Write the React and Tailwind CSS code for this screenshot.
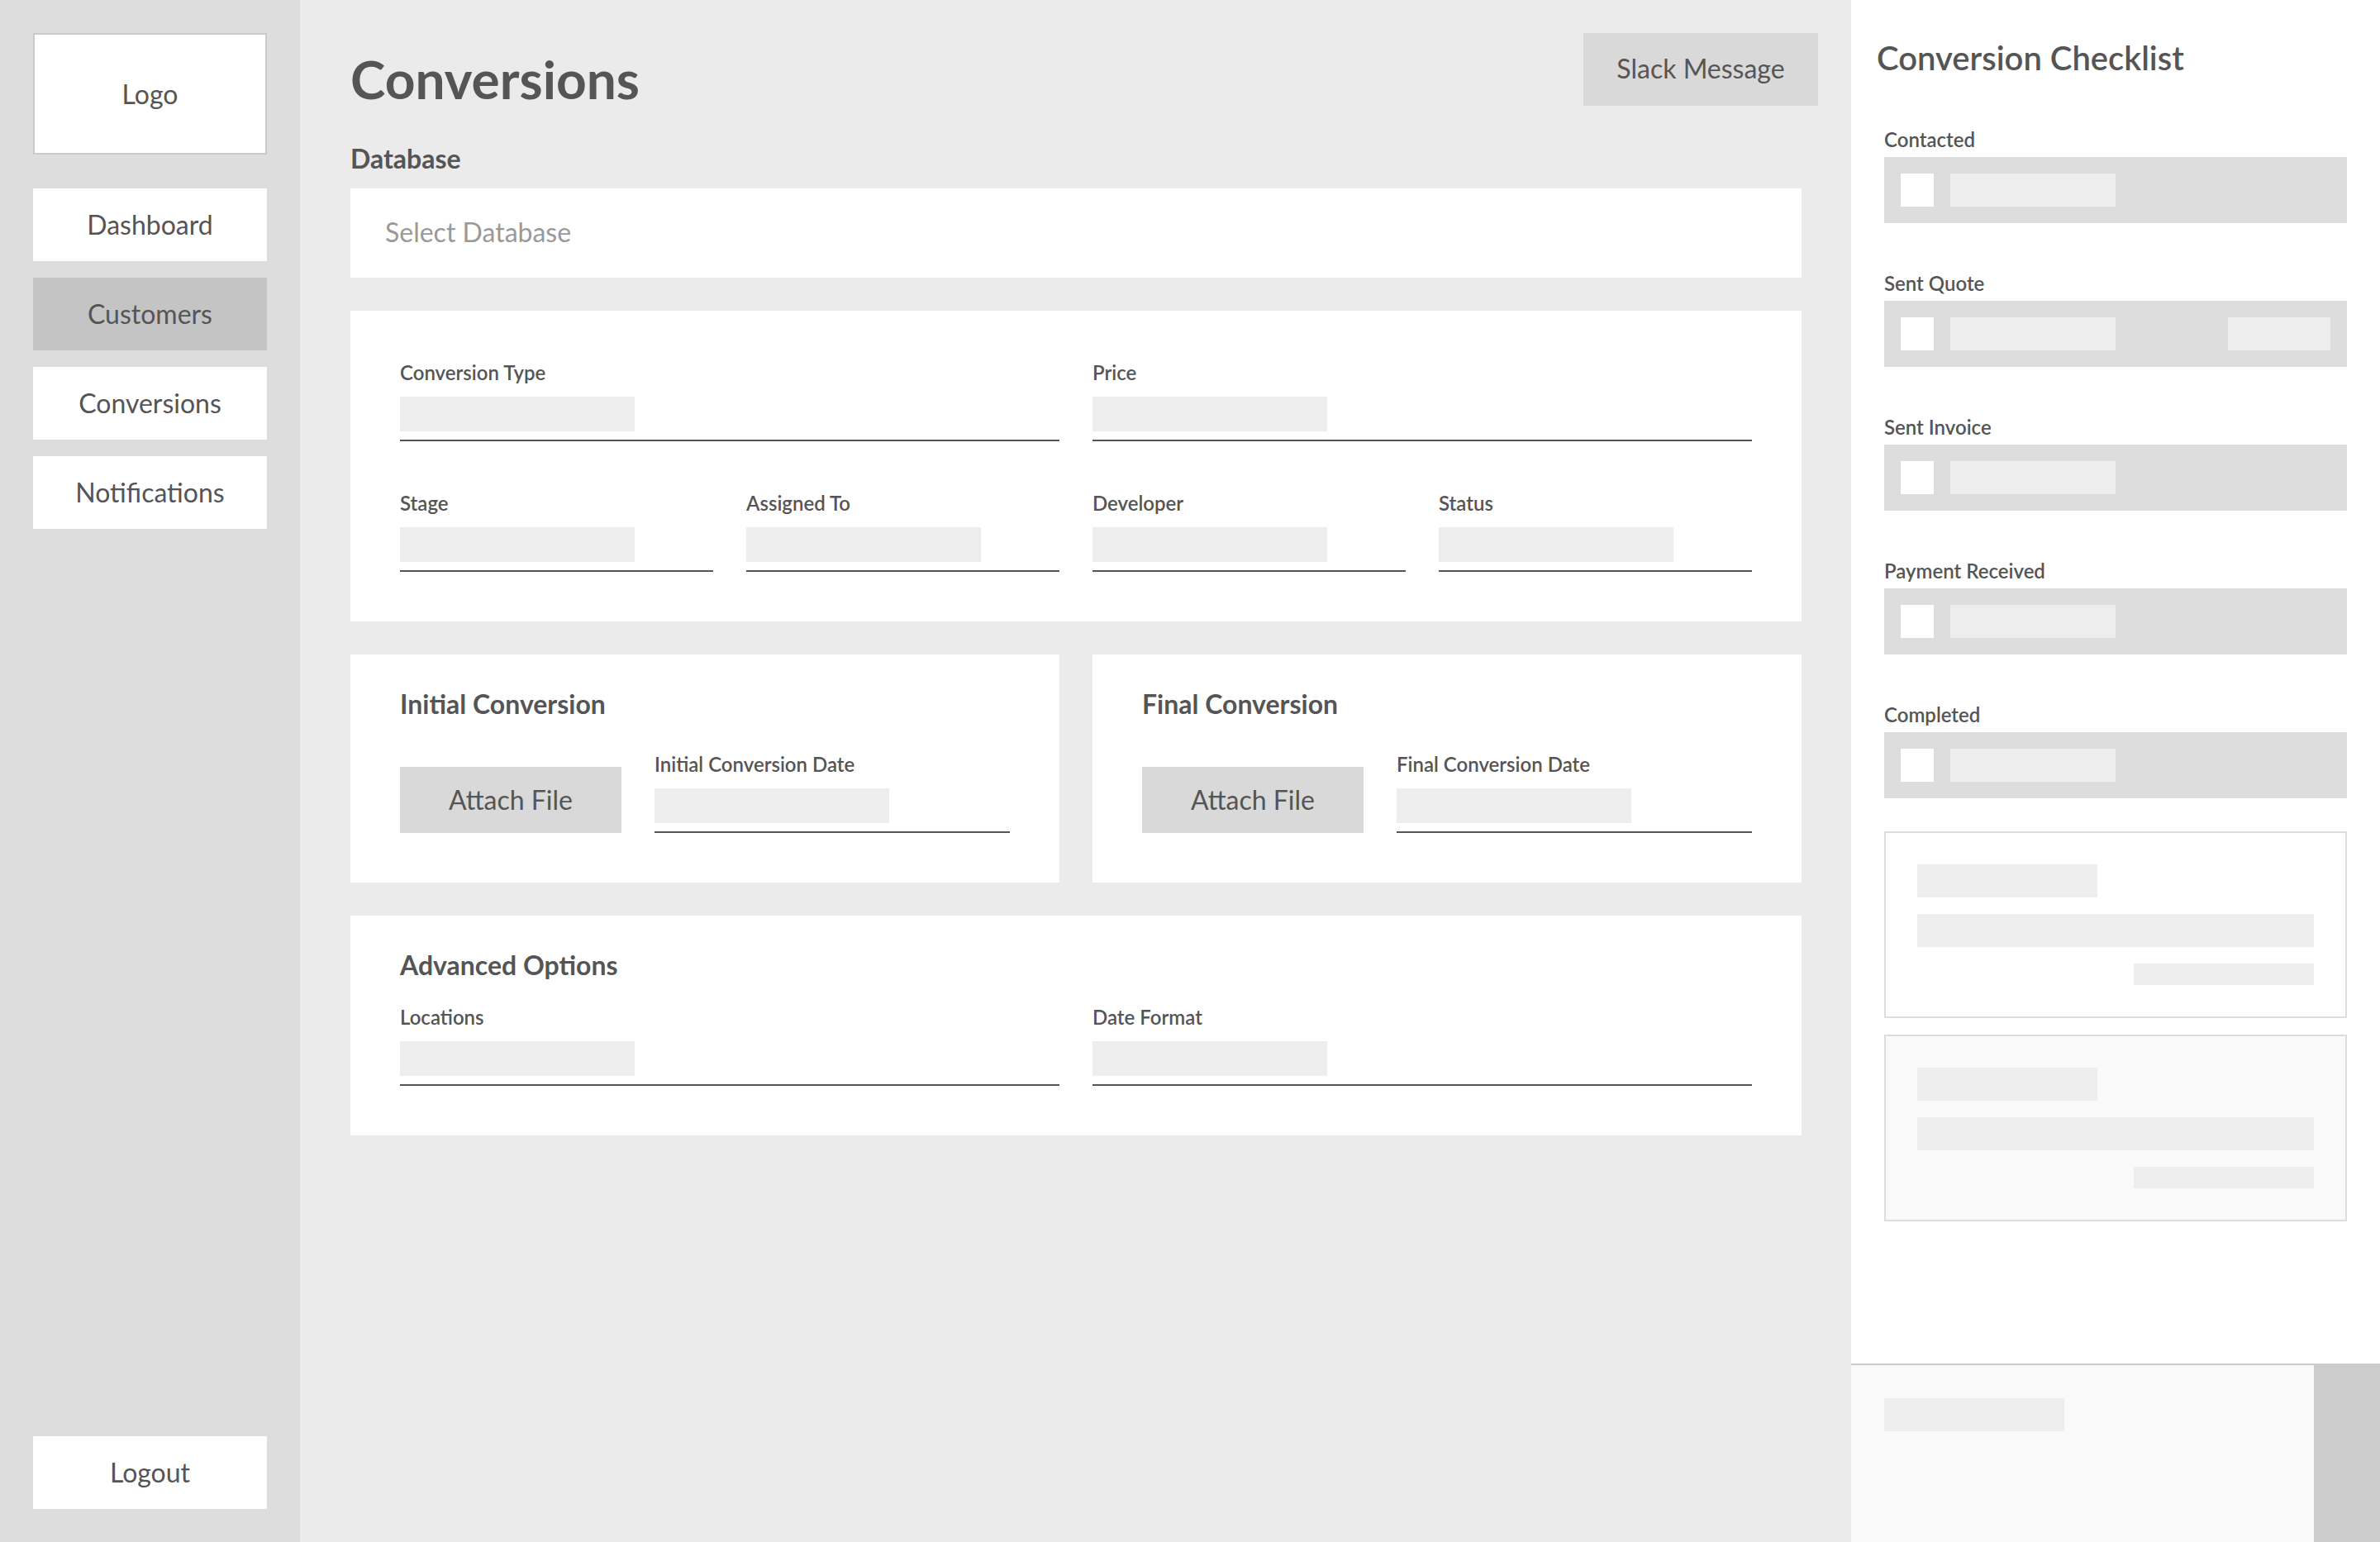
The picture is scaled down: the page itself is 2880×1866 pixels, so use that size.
import React from 'react';

const navItems = ['Dashboard', 'Customers', 'Conversions', 'Notifications'];
const checklist = ['Contacted', 'Sent Quote', 'Sent Invoice', 'Payment Received', 'Completed'];

function Field({ label, className = '' }) {
    return (
        <div className={`flex flex-col ${className}`}>
            <div className="text-[24px] leading-[30px] font-semibold text-[#555555]">{label}</div>
            <div className="mt-[14px] h-[42px] w-[284px] bg-[#ededed]" />
            <div className="mt-[10px] h-[2px] w-full bg-[#555555]" />
        </div>
    );
}

function ConversionCard({ title, dateLabel }) {
    return (
        <div className="bg-white px-[60px] pt-[40px] pb-[60px]">
            <h2 className="text-[32px] leading-[40px] font-bold text-[#555555]">{title}</h2>
            <div className="mt-[38px] flex items-end gap-[40px]">
                <button className="h-[80px] w-[268px] shrink-0 bg-[#d9d9d9] text-[32px] text-[#555555]">
                    Attach File
                </button>
                <Field label={dateLabel} className="flex-1" />
            </div>
        </div>
    );
}

function PreviewCard({ shaded }) {
    return (
        <div className={`flex flex-col gap-[20px] border-2 border-[#dddddd] p-[38px] ${shaded ? 'bg-[#f9f9f9]' : 'bg-white'}`}>
            <div className="h-[40px] w-[218px] bg-[#ededed]" />
            <div className="h-[40px] w-full bg-[#ededed]" />
            <div className="h-[26px] w-[218px] self-end bg-[#ededed]" />
        </div>
    );
}

export default function App() {
    return (
        <div className="flex h-screen w-full overflow-hidden text-[#555555] [font-family:Lato,'Liberation_Sans',sans-serif]">
            {/* sidebar */}
            <aside className="flex w-[363px] shrink-0 flex-col bg-[#dddddd] p-[40px]">
                <div className="flex h-[147px] items-center justify-center border-2 border-[#cacaca] bg-white text-[32px]">
                    Logo
                </div>
                <nav className="mt-[41px] flex flex-col gap-[20px]">
                    {navItems.map(item => (
                        <div
                            key={item}
                            className={`flex h-[88px] items-center justify-center text-[32px] ${item === 'Customers' ? 'bg-[#c4c4c4]' : 'bg-white'}`}
                        >
                            {item}
                        </div>
                    ))}
                </nav>
                <div className="mt-auto flex h-[88px] items-center justify-center bg-white text-[32px]">
                    Logout
                </div>
            </aside>

            {/* main */}
            <main className="flex-1 bg-[#ebebeb] pt-[40px] pl-[61px] pr-[40px]">
                <div className="flex items-start justify-between">
                    <h1 className="mt-[24px] text-[64px] leading-none font-bold">Conversions</h1>
                    <button className="h-[88px] w-[284px] bg-[#d9d9d9] pb-[2px] text-[32px]">Slack Message</button>
                </div>

                <div className="mr-[20px]">
                    <div className="mt-[47px] text-[32px] leading-[34px] font-bold">Database</div>
                    <div className="mt-[19px] flex h-[108px] items-center bg-white pl-[42px] pb-[2px] text-[32px] text-[#999999]">
                        Select Database
                    </div>

                    <div className="mt-[40px] grid grid-cols-4 gap-x-[40px] gap-y-[60px] bg-white p-[60px]">
                        <Field label="Conversion Type" className="col-span-2" />
                        <Field label="Price" className="col-span-2" />
                        <Field label="Stage" />
                        <Field label="Assigned To" />
                        <Field label="Developer" />
                        <Field label="Status" />
                    </div>

                    <div className="mt-[40px] grid grid-cols-2 gap-[40px]">
                        <ConversionCard title="Initial Conversion" dateLabel="Initial Conversion Date" />
                        <ConversionCard title="Final Conversion" dateLabel="Final Conversion Date" />
                    </div>

                    <div className="mt-[40px] bg-white px-[60px] pt-[40px] pb-[60px]">
                        <h2 className="text-[32px] leading-[40px] font-bold">Advanced Options</h2>
                        <div className="mt-[28px] grid grid-cols-2 gap-x-[40px]">
                            <Field label="Locations" />
                            <Field label="Date Format" />
                        </div>
                    </div>
                </div>
            </main>

            {/* checklist panel */}
            <aside className="flex w-[640px] shrink-0 flex-col bg-white">
                <h2 className="pt-[46px] pl-[31px] text-[40px] leading-[48px] font-semibold">Conversion Checklist</h2>
                <div className="mt-[60px] flex flex-col gap-[58px] px-[40px]">
                    {checklist.map(item => (
                        <div key={item}>
                            <div className="text-[24px] leading-[30px] font-semibold">{item}</div>
                            <div className="mt-[6px] flex h-[80px] items-center gap-[20px] bg-[#dddddd] px-[20px]">
                                <div className="h-[40px] w-[40px] bg-white" />
                                <div className="h-[40px] w-[200px] bg-[#ededed]" />
                                {item === 'Sent Quote' && <div className="ml-auto h-[40px] w-[124px] bg-[#ededed]" />}
                            </div>
                        </div>
                    ))}
                </div>
                <div className="mt-[40px] flex flex-col gap-[20px] px-[40px]">
                    <PreviewCard />
                    <PreviewCard shaded />
                </div>
                <div className="mt-auto flex h-[216px] border-t-2 border-[#cccccc]">
                    <div className="flex-1 bg-[#f9f9f9] pt-[40px] pl-[40px]">
                        <div className="h-[40px] w-[218px] bg-[#ededed]" />
                    </div>
                    <div className="w-[80px] -mt-[2px] bg-[#cccccc]" />
                </div>
            </aside>
        </div>
    );
}
